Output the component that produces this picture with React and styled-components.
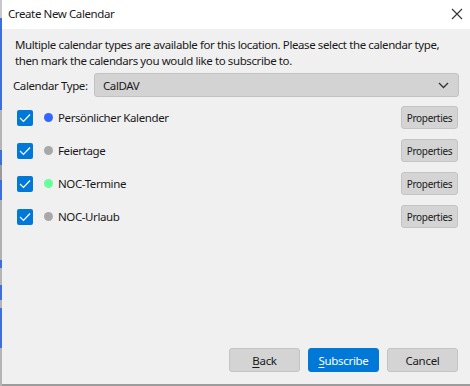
import React from "react";
import styled, { createGlobalStyle } from "styled-components";

const Global = createGlobalStyle`
  html, body { margin: 0; padding: 0; background: #f0f0f0; }
  body { font-family: "Noto Sans", "Open Sans", Arial, sans-serif; font-size: 11.5px; letter-spacing: -0.4px; color: #1a1a1a; }
  * { box-sizing: border-box; }
`;

const Screen = styled.div`
  width: 470px;
  height: 386px;
  display: flex;
  overflow: hidden;
`;

const Edge = styled.div`
  width: 2px;
  flex: none;
  background: linear-gradient(
    to bottom,
    #c8c8c8 0px, #c8c8c8 18px,
    #3d6fd6 18px, #3d6fd6 110px,
    #b4b4b4 110px, #b4b4b4 150px,
    #3d6fd6 150px, #3d6fd6 165px,
    #9a9a9a 165px, #9a9a9a 180px,
    #3d6fd6 180px, #3d6fd6 200px,
    #b0b0b0 200px, #b0b0b0 260px,
    #3d6fd6 260px, #3d6fd6 268px,
    #b4b4b4 268px, #b4b4b4 285px,
    #3d6fd6 285px, #3d6fd6 300px,
    #b4b4b4 300px, #b4b4b4 308px,
    #3d6fd6 308px, #3d6fd6 348px,
    #b4b4b4 348px
  );
`;

const Window = styled.div`
  flex: 1;
  display: flex;
  flex-direction: column;
  background: #f0f0f0;
  border-bottom: 2px solid #9c9c9c;
`;

const TitleBar = styled.div`
  height: 29px;
  background: #ffffff;
  display: flex;
  align-items: center;
  justify-content: space-between;
  padding: 0 6px 0 6px;
  flex: none;
`;

const Title = styled.span`
  font-size: 11.5px;
  color: #1b1b1b;
  margin-top: -2px;
`;

const Close = styled.span`
  width: 12px;
  height: 12px;
  display: flex;
  margin-right: 1px;
  margin-top: -2px;
`;

const Body = styled.div`
  flex: 1;
  display: flex;
  flex-direction: column;
  padding: 8px 11px 12px 11px;
`;

const Intro = styled.p`
  margin: 0 0 4px 2px;
  line-height: 16px;
  font-size: 11.5px;
  color: #1a1a1a;
`;

const TypeRow = styled.div`
  display: flex;
  align-items: center;
  margin-bottom: 9px;
`;

const TypeLabel = styled.label`
  width: 81px;
  white-space: nowrap;
  font-size: 11.5px;
`;

const Select = styled.div`
  flex: 1;
  height: 24px;
  background: #d3d3d3;
  border: 1px solid #c2c2c2;
  border-radius: 3px;
  display: flex;
  align-items: center;
  justify-content: space-between;
  padding: 0 9px 0 8px;
  font-size: 11.5px;
`;

const List = styled.div`
  display: flex;
  flex-direction: column;
  gap: 10px;
`;

const Row = styled.div`
  display: flex;
  align-items: center;
  height: 23px;
`;

const Check = styled.span`
  width: 16px;
  height: 16px;
  background: #0078d7;
  border-radius: 2px;
  display: flex;
  align-items: center;
  justify-content: center;
  margin-left: 4px;
  flex: none;
`;

const Dot = styled.span`
  width: 9px;
  height: 9px;
  border-radius: 50%;
  background: ${(p) => p.$color};
  margin-left: 11px;
  margin-right: 5px;
  flex: none;
`;

const Name = styled.span`
  flex: 1;
  font-size: 11.5px;
  color: #1a1a1a;
`;

const SmallButton = styled.button`
  width: 57px;
  height: 23px;
  font-family: inherit;
  font-size: 10px;
  letter-spacing: -0.3px;
  color: #1a1a1a;
  background: #d4d4d4;
  border: 1px solid #c4c4c4;
  border-radius: 3px;
  padding: 0;
  margin-right: 1px;
`;

const Spacer = styled.div`
  flex: 1;
`;

const Footer = styled.div`
  display: flex;
  justify-content: flex-end;
  gap: 8px;
  padding-right: 1px;
`;

const Button = styled.button`
  width: 71px;
  height: 24px;
  font-family: inherit;
  font-size: 11.5px;
  letter-spacing: -0.3px;
  border-radius: 3px;
  padding: 0;
  color: ${(p) => (p.$primary ? "#ffffff" : "#1a1a1a")};
  background: ${(p) => (p.$primary ? "#0078d7" : "#d4d4d4")};
  border: 1px solid ${(p) => (p.$primary ? "#0078d7" : "#c4c4c4")};
`;

const U = styled.span`
  text-decoration: underline;
  text-underline-offset: 2px;
`;

const calendars = [
  { name: "Persönlicher Kalender", color: "#3366ff" },
  { name: "Feiertage", color: "#a8a8a8" },
  { name: "NOC-Termine", color: "#66ff99" },
  { name: "NOC-Urlaub", color: "#a8a8a8" },
];

export default function App() {
  return (
    <>
      <Global />
      <Screen>
        <Edge />
        <Window>
          <TitleBar>
            <Title>Create New Calendar</Title>
            <Close>
              <svg width="12" height="12" viewBox="0 0 12 12">
                <path d="M1 1L11 11M11 1L1 11" stroke="#333" strokeWidth="1.1" fill="none" />
              </svg>
            </Close>
          </TitleBar>
          <Body>
            <Intro>
              Multiple calendar types are available for this location. Please select the calendar type,
              then mark the calendars you would like to subscribe to.
            </Intro>
            <TypeRow>
              <TypeLabel>Calendar Type:</TypeLabel>
              <Select>
                <span>CalDAV</span>
                <svg width="11" height="7" viewBox="0 0 11 7">
                  <path d="M1 1L5.5 5.5L10 1" stroke="#333" strokeWidth="1.3" fill="none" />
                </svg>
              </Select>
            </TypeRow>
            <List>
              {calendars.map((c) => (
                <Row key={c.name}>
                  <Check>
                    <svg width="12" height="10" viewBox="0 0 12 10">
                      <path d="M1 5L4.5 8.5L11 1.5" stroke="#fff" strokeWidth="1.2" fill="none" />
                    </svg>
                  </Check>
                  <Dot $color={c.color} />
                  <Name>{c.name}</Name>
                  <SmallButton>Properties</SmallButton>
                </Row>
              ))}
            </List>
            <Spacer />
            <Footer>
              <Button><U>B</U>ack</Button>
              <Button $primary><U>S</U>ubscribe</Button>
              <Button>Cancel</Button>
            </Footer>
          </Body>
        </Window>
      </Screen>
    </>
  );
}
